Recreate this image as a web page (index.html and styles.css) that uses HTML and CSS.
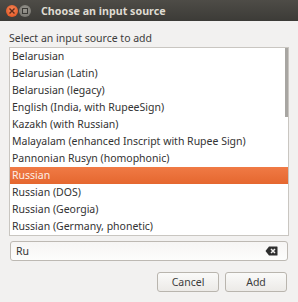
FILE: index.html
```html
<!DOCTYPE html>
<html lang="en">
<head>
    <meta charset="UTF-8">
    <title>Choose an input source</title>
    <link rel="stylesheet" href="styles.css">
</head>
<body>
    <div class="window">
        <!-- Title bar -->
        <div class="titlebar">
            <span class="win-btn close">
                <svg width="8" height="8" viewBox="0 0 8 8"><path d="M1.5 1.5 L6.5 6.5 M6.5 1.5 L1.5 6.5" stroke="#5a2a1a" stroke-width="1.4"/></svg>
            </span>
            <span class="win-btn minimize">
                <svg width="8" height="8" viewBox="0 0 8 8"><rect x="1.5" y="1.5" width="5" height="5" fill="none" stroke="#3a3935" stroke-width="1"/></svg>
            </span>
            <span class="title">Choose an input source</span>
        </div>

        <div class="content">
            <div class="label">Select an input source to add</div>

            <div class="list">
                <div class="row">Belarusian</div>
                <div class="row">Belarusian (Latin)</div>
                <div class="row">Belarusian (legacy)</div>
                <div class="row">English (India, with RupeeSign)</div>
                <div class="row">Kazakh (with Russian)</div>
                <div class="row">Malayalam (enhanced Inscript with Rupee Sign)</div>
                <div class="row">Pannonian Rusyn (homophonic)</div>
                <div class="row selected">Russian</div>
                <div class="row">Russian (DOS)</div>
                <div class="row">Russian (Georgia)</div>
                <div class="row">Russian (Germany, phonetic)</div>
                <div class="scroll-thumb"></div>
            </div>

            <div class="search">
                <span class="search-text">Ru</span>
                <svg class="clear-icon" width="13" height="10" viewBox="0 0 13 10">
                    <path d="M4 0.5 H12 Q12.5 0.5 12.5 1 V9 Q12.5 9.5 12 9.5 H4 L0.5 5 Z" fill="#2e2e2e"/>
                    <path d="M6 3 L10 7 M10 3 L6 7" stroke="#f2f1f0" stroke-width="1.5"/>
                </svg>
            </div>

            <div class="actions">
                <button class="btn">Cancel</button>
                <button class="btn">Add</button>
            </div>
        </div>
    </div>
</body>
</html>
```

FILE: styles.css
```css
/* General */
body {
    margin: 0;
    padding: 0;
    background-color: #f2f1f0;
    font-family: "Noto Sans", "DejaVu Sans", sans-serif;
    color: #3c3c3c;
}

.window {
    width: 298px;
    height: 302px;
    background-color: #f2f1f0;
}

/* Title bar */
.titlebar {
    height: 21px;
    display: flex;
    align-items: center;
    background: linear-gradient(#4e4c47, #3c3b37);
    padding-left: 6px;
}

.win-btn {
    width: 12px;
    height: 12px;
    border-radius: 50%;
    display: flex;
    align-items: center;
    justify-content: center;
    margin-right: 1px;
}

.close {
    background: radial-gradient(circle at 50% 40%, #f58a5c, #df4a16);
}

.minimize {
    background: radial-gradient(circle at 50% 40%, #9a9891, #6f6d67);
}

.title {
    margin-left: 9px;
    color: #dfdbd2;
    font-size: 10.7px;
    font-weight: bold;
}

/* Content */
.content {
    padding: 8px 9px 0 9px;
}

.label {
    font-size: 10.5px;
    line-height: 18px;
}

.list {
    position: relative;
    background-color: #fff;
    border: 1px solid #c9c6c1;
    height: 187px;
    overflow: hidden;
}

.row {
    height: 17px;
    line-height: 17px;
    padding-left: 2px;
    font-size: 10.5px;
    color: #333;
    white-space: nowrap;
}

.row.selected {
    background: linear-gradient(#f07a45, #e5672f);
    color: #fdeee6;
}

.scroll-thumb {
    position: absolute;
    top: 0;
    right: 0;
    width: 3px;
    height: 69px;
    background-color: #a8a6a2;
}

/* Search entry */
.search {
    margin: 5px 1px 0 1px;
    height: 18px;
    border: 1px solid #bdb9b3;
    border-radius: 3px;
    background: linear-gradient(#f6f5f4, #fdfdfc);
    display: flex;
    align-items: center;
    justify-content: space-between;
    padding: 0 9px 0 5px;
}

.search-text {
    font-size: 10.5px;
    color: #333;
}

/* Buttons */
.actions {
    display: flex;
    justify-content: flex-end;
    gap: 6px;
    margin-top: 11px;
    margin-right: 2px;
}

.btn {
    width: 62px;
    height: 20px;
    border: 1px solid #b9b5ae;
    border-radius: 3px;
    background: linear-gradient(#fafaf9, #eceae7);
    font-family: "Noto Sans", "DejaVu Sans", sans-serif;
    font-size: 10.5px;
    color: #3c3c3c;
    padding: 0;
}
```
